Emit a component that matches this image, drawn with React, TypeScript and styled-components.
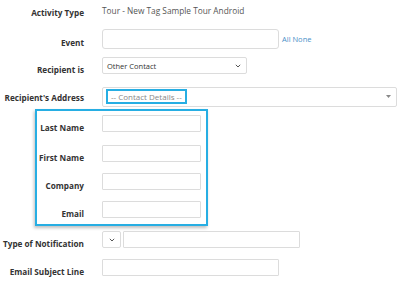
import * as React from 'react';
import styled, { createGlobalStyle } from 'styled-components';

const GlobalStyle = createGlobalStyle`
  html, body {
    margin: 0;
    padding: 0;
    background: #ffffff;
  }
  body {
    font-family: 'Open Sans', 'Noto Sans', sans-serif;
  }
`;

const highlight = '#27aee3';

const Form = styled.div`
  width: 400px;
  height: 286px;
  overflow: hidden;
  display: flex;
  flex-direction: column;
`;

const Row = styled.div<{ $top?: number; $height: number }>`
  display: flex;
  align-items: center;
  height: ${(p) => p.$height}px;
  margin-top: ${(p) => p.$top || 0}px;
`;

const Label = styled.div<{ $width?: number }>`
  width: ${(p) => p.$width || 84}px;
  flex-shrink: 0;
  margin-right: 18px;
  padding-top: 7px;
  text-align: right;
  white-space: nowrap;
  font-size: 8.2px;
  line-height: 11px;
  font-weight: 700;
  color: #333333;
`;

const Value = styled.div`
  font-size: 8.3px;
  color: #555555;
  padding-bottom: 1px;
`;

const Input = styled.div<{ $width: number; $height?: number; $radius?: number }>`
  box-sizing: border-box;
  width: ${(p) => p.$width}px;
  height: ${(p) => p.$height || 17}px;
  border: 1px solid #dcdcdc;
  border-radius: ${(p) => p.$radius ?? 1}px;
  background: #ffffff;
`;

const Select = styled.div<{ $width: number; $height?: number; $center?: boolean }>`
  box-sizing: border-box;
  width: ${(p) => p.$width}px;
  height: ${(p) => p.$height || 17}px;
  border: 1px solid #dcdcdc;
  border-radius: 2px;
  background: #ffffff;
  display: flex;
  align-items: center;
  justify-content: ${(p) => (p.$center ? 'center' : 'space-between')};
  padding: ${(p) => (p.$center ? '0' : '0 5px 0 4px')};
  font-size: 7.5px;
  color: #333333;
`;

const Link = styled.a`
  margin-left: 3px;
  font-size: 7.5px;
  color: #4a90c8;
  text-decoration: none;
`;

const Placeholder = styled.span`
  box-sizing: border-box;
  height: 15px;
  margin-left: -1px;
  padding: 0 3px;
  display: flex;
  align-items: center;
  border: 2px solid ${highlight};
  font-size: 8px;
  color: #888888;
`;

const Group = styled.div`
  box-sizing: border-box;
  margin: 3px 0 0 35px;
  width: 173px;
  padding: 4px 0 6px;
  border: 2px solid ${highlight};
  box-shadow: -1px 2px 3px rgba(0, 0, 0, 0.25);
  display: flex;
  flex-direction: column;
`;

const Gap = styled.div`
  width: 2px;
`;

const Chevron = () => (
  <svg width="6" height="4" viewBox="0 0 6 4">
    <path d="M0.8 0.8 L3 3 L5.2 0.8" fill="none" stroke="#555" strokeWidth="1" />
  </svg>
);

const Caret = () => (
  <svg width="5" height="3" viewBox="0 0 5 3">
    <path d="M0 0 L5 0 L2.5 3 Z" fill="#888" />
  </svg>
);

const App: React.FC = () => (
  <>
    <GlobalStyle />
    <Form>
      <Row $height={22}>
        <Label style={{ paddingTop: 3 }}>Activity Type</Label>
        <Value>Tour - New Tag Sample Tour Android</Value>
      </Row>
      <Row $top={7} $height={20}>
        <Label>Event</Label>
        <Input $width={177} $height={20} $radius={3} />
        <Link>All None</Link>
      </Row>
      <Row $top={8} $height={17}>
        <Label>Recipient is</Label>
        <Select $width={145}>
          <span>Other Contact</span>
          <Chevron />
        </Select>
      </Row>
      <Row $top={13} $height={19}>
        <Label style={{ paddingTop: 1 }}>Recipient&apos;s Address</Label>
        <Select $width={295} $height={20}>
          <Placeholder>-- Contact Details --</Placeholder>
          <Caret />
        </Select>
      </Row>
      <Group>
        <Row $height={17}>
          <Label $width={47}>Last Name</Label>
          <Input $width={99} />
        </Row>
        <Row $top={13} $height={17}>
          <Label $width={47}>First Name</Label>
          <Input $width={99} />
        </Row>
        <Row $top={11} $height={17}>
          <Label $width={47}>Company</Label>
          <Input $width={99} />
        </Row>
        <Row $top={11} $height={17}>
          <Label $width={47}>Email</Label>
          <Input $width={99} />
        </Row>
      </Group>
      <Row $top={5} $height={17}>
        <Label>Type of Notification</Label>
        <Select $width={19} $center>
          <Chevron />
        </Select>
        <Gap />
        <Input $width={177} />
      </Row>
      <Row $top={11} $height={17}>
        <Label>Email Subject Line</Label>
        <Input $width={177} />
      </Row>
    </Form>
  </>
);

export default App;
